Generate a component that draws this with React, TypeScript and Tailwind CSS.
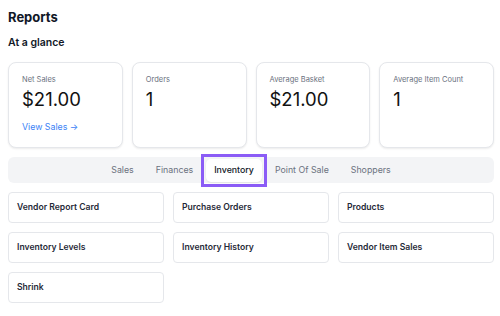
import React from "react";

const stats = [
  { label: "Net Sales", value: "$21.00", link: true },
  { label: "Orders", value: "1" },
  { label: "Average Basket", value: "$21.00" },
  { label: "Average Item Count", value: "1" },
];

const tabs = ["Sales", "Finances", "Inventory", "Point Of Sale", "Shoppers"];

const reports = [
  "Vendor Report Card",
  "Purchase Orders",
  "Products",
  "Inventory Levels",
  "Inventory History",
  "Vendor Item Sales",
  "Shrink",
];

export default function App() {
  return (
    <div
      className="w-[500px] h-[316px] bg-white pl-2 pr-[6px] pt-[7px] overflow-hidden text-[#111827]"
      style={{ fontFamily: "Inter, 'Liberation Sans', sans-serif" }}
    >
      <h1 className="text-[13px] font-bold leading-[20px]">Reports</h1>
      <h2 className="mt-[9px] text-[10.5px] font-semibold leading-[14px]">At a glance</h2>
      <div className="mt-[12px] grid grid-cols-4 gap-[9px]">
        {stats.map((s) => (
          <div
            key={s.label}
            className="h-[86px] rounded-[8px] border border-[#e5e7eb] bg-white shadow-[0_1px_2px_rgba(0,0,0,0.08)] px-[13px] pt-[12px]"
          >
            <div className="text-[7.5px] leading-[10px] text-[#6b7280]">{s.label}</div>
            <div className="mt-[2px] text-[18.5px] leading-[24px] text-[#111]">{s.value}</div>
            {s.link && (
              <div className="mt-[10px] text-[8.8px] leading-[12px] text-[#3b82f6]">View Sales →</div>
            )}
          </div>
        ))}
      </div>
      <div className="mt-[9px] h-[26px] rounded-[6px] bg-[#f3f4f6] flex items-center justify-center">
        {tabs.map((t) => {
          const active = t === "Inventory";
          return active ? (
            <div key={t} className="relative mx-[2px]">
              <div className="h-[23px] px-[8px] flex items-center rounded-[5px] bg-white shadow-[0_1px_2px_rgba(0,0,0,0.08)] text-[8.8px] font-medium text-[#111827]">
                {t}
              </div>
              <div className="absolute -left-[5px] -right-[5px] -top-[5px] -bottom-[5px] border-[3px] border-[#8b5cf6]" />
            </div>
          ) : (
            <div key={t} className="px-[11px] text-[8.8px] text-[#6b7280]">
              {t}
            </div>
          );
        })}
      </div>
      <div className="mt-[9px] grid grid-cols-3 gap-[9px]">
        {reports.map((r) => (
          <div
            key={r}
            className="h-[31px] rounded-[4px] border border-[#e5e7eb] bg-white flex items-center px-[8px] text-[8.6px] font-semibold text-[#1f2937]"
          >
            {r}
          </div>
        ))}
      </div>
    </div>
  );
}
